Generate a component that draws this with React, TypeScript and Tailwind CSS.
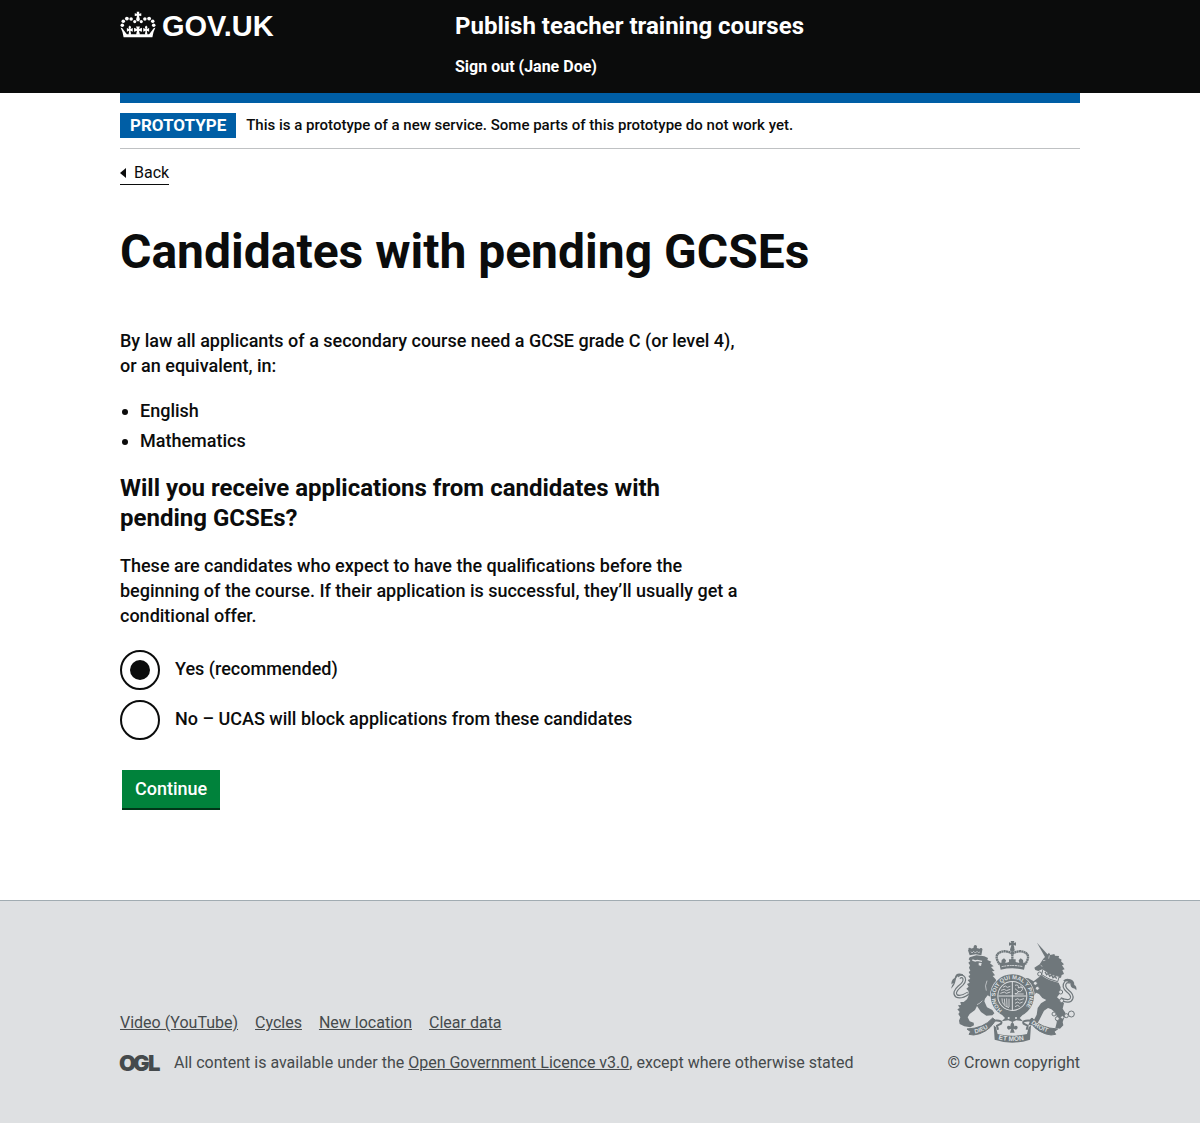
import type { ReactNode } from "react";

function CrownIcon() {
  return (
    <svg viewBox="29 33 110 82" className="-mt-[3px] h-[27px] w-9 shrink-0" fill="currentColor" aria-hidden="true">
      <path d="M80 35h8l-1 6 7-1v8l-7-1 2 9q-5 6-10 0l2-9-7 1v-8l7 1z" />
      <circle cx="84" cy="59" r="5.5" />
      <circle cx="36" cy="76" r="5.4" />
      <circle cx="39" cy="64" r="5.4" />
      <circle cx="50" cy="56" r="5.8" />
      <circle cx="63" cy="57" r="5.4" />
      <circle cx="74" cy="65" r="4.8" />
      <circle cx="132" cy="76" r="5.4" />
      <circle cx="129" cy="64" r="5.4" />
      <circle cx="118" cy="56" r="5.8" />
      <circle cx="105" cy="57" r="5.4" />
      <circle cx="94" cy="65" r="4.8" />
      <path d="M31 84q6-1 10 8l9 12h68l9-12q4-9 10-8-6 10-9 29H40q-3-19-9-29z" />
      <path d="M55 82l4-5 4 5-2 6 7-3v11l-7-3 2 12h-8l2-12-7 3v-11l7 3zM105 82l4-5 4 5-2 6 7-3v11l-7-3 2 12h-8l2-12-7 3v-11l7 3zM78 80h12l-3 8 9-4v12l-9-3 3 12H78l3-12-9 3v-12l9 4z" />
    </svg>
  );
}

function RoyalArms() {
  return (
    <svg viewBox="31 30 381 315" className="h-[105px] w-[127px] overflow-visible" fill="#6f777b" role="img" aria-label="Royal coat of arms">
      {/* lion */}
      <g>
        <path d="M90 76l-5-15 7-5 9-2 3-6h5l2 6 9 2 8 5-3 15-17-3z" />
        <circle cx="107" cy="50" r="5" />
        <circle cx="90" cy="57" r="4" />
        <circle cx="124" cy="58" r="4" />
        <path d="M94 65l3 4 5-5 5 5 5-5 4 4 5-2" fill="none" stroke="#dee0e2" strokeWidth="2" />
        <path d="M90 82L110 76 134 79 145 84 143 90 155 95 151 100 162 109 154 111 165 123 157 124 166 136 159 138 168 148 172 158 168 168 160 178 163 190 170 195 172 206 162 208 152 200 144 196 136 206 134 214 142 232 158 240 164 250 158 256 140 257 124 246 112 228 106 240 90 252 84 262 90 274 102 278 103 286 92 292 74 289 60 282 58 272 62 262 56 252 60 246 53 238 60 234 55 226 64 225 62 216 72 216 82 208 88 194 86 182 80 176 87 170 82 162 90 158 84 150 92 147 86 138 92 135 87 126 92 122 88 113 91 106 86 98 92 93 87 88z" />
        <path d="M98 90l9 3 6-2 14 3" fill="none" stroke="#dee0e2" strokeWidth="4" />
        <path d="M117 98l9 1-2 9-7-2z" fill="#dee0e2" />
        <path d="M142 152q-8 16-2 30M112 224q10-4 16-12" fill="none" stroke="#dee0e2" strokeWidth="2" />
        <path d="M86 190q-22 14-35 8-12-10 8-28 19-14 14-26-6-9-15-1" fill="none" stroke="#6f777b" strokeWidth="11" />
        <path d="M84 190q-20 14-33 8-12-10 8-28 19-14 14-26-6-9-15-1" fill="none" stroke="#dee0e2" strokeWidth="4" />
        <path d="M70 137q-20-4-22 14-3 17-14 25 3-12 8-16-8 0-6 8-4-17 9-24 4-19 25-11z" />
      </g>
      {/* unicorn */}
      <g>
        <path d="M292 38l36 40-9 8z" />
        <path d="M300 103l11-17 10-10 7-8 4 7 12-3 2 5 12 1-1 6 9 5-2 5 9 9-6 3 8 12-7 2 5 12-7 3-2 8-14 1-36-16-3-12-15 7-9-3-3-7z" />
        <path d="M310 92l7-1M303 106l5 3M329 76l-2 10" stroke="#dee0e2" strokeWidth="2" />
        <path d="M310 117q20 18 49 22l-5 16q-28-6-48-21z" fill="#dee0e2" stroke="#6f777b" strokeWidth="3" />
        <path d="M316 126l5 8 5-4 4 9 6-4 4 8 6-4 5 7" fill="none" stroke="#6f777b" strokeWidth="4" />
        <path d="M305 136q24 18 52 22l6 14-2 18-9 12 12 10 9 8-4 16 8 12-3 14-5 14 2 10-10 10-14-2 4-16 1-18-5-12-12-10-10-4-12 8-8 16-6 12-7 12-16 4-10-1 4-9 14-8 7-14 3-20 10-14 16-10-12-6-10-12-9-4-8 12-12-4 0-10 7-10-10-12-8-8-12 2-2-8 8-7 14 2 16 9z" />
        <path d="M362 207q29 12 34-2 3-10-12-22-16-14-6-26 8-7 15 1" fill="none" stroke="#6f777b" strokeWidth="11" />
        <path d="M362 207q29 12 34-2 3-10-12-22-16-14-6-26 8-7 15 1" fill="none" stroke="#dee0e2" strokeWidth="4" />
        <path d="M370 153q8-10 22-5 12 3 12 17 8 4 6 16-6-8-10-6-8-3-8-15-8-8-22-7z" />
        <g fill="#dee0e2" stroke="#6f777b" strokeWidth="3">
          <circle cx="395" cy="252" r="9" />
          <circle cx="380" cy="257" r="6" />
          <circle cx="343" cy="252" r="6" />
          <circle cx="353" cy="266" r="6" />
          <circle cx="368" cy="262" r="5" />
          <circle cx="366" cy="212" r="6" />
          <circle cx="363" cy="186" r="6" />
          <circle cx="300" cy="132" r="6" />
          <circle cx="287" cy="160" r="6" />
          <circle cx="293" cy="175" r="6" />
        </g>
      </g>
      {/* garter and shield */}
      <circle cx="218" cy="198" r="67" fill="#dee0e2" />
      <circle cx="218" cy="198" r="55" fill="none" stroke="#6f777b" strokeWidth="20" />
      <path id="garter" d="M188 240a51 51 0 1 1 60 0" fill="none" />
      <text fill="#dee0e2" fontFamily="Liberation Sans, sans-serif" fontSize="17" fontWeight="700">
        <textPath href="#garter">HONI SOIT QUI MAL Y PENSE</textPath>
      </text>
      <circle cx="218" cy="198" r="42" />
      <path d="M218 156v84M176 198h84" stroke="#dee0e2" strokeWidth="3" />
      <g stroke="#dee0e2" strokeWidth="2.5" fill="none">
        <path d="M190 172l7-4 6 4 9-3M184 181l10-3 6 4 12-4M182 190l12-4 6 4 12-4" />
        <path d="M226 166q12-4 10 8 14-6 12 5-4 9-13 6-2 8-10 6M226 176l12 10M242 168l8 6M226 192h26" />
        <path d="M187 205q-1 22 21 28M194 206l2 20M201 205l1 25M208 206v25" />
        <path d="M226 210l8-4 6 4 13-4M226 220l8-4 6 4 9-4M226 230l8-4 6 4" />
      </g>
      <path d="M188 256l18-4 12 8 12-8 18 4-8 8 10 10-20-3-12 5-12-5-20 3 10-10z" />
      <circle cx="207" cy="264" r="3" fill="#dee0e2" />
      <circle cx="229" cy="264" r="3" fill="#dee0e2" />
      {/* crown */}
      <path d="M213 33h11l-2 6 7-2v10l-7-2 2 9q-5 4-11 0l2-9-7 2v-10l7 2z" />
      <circle cx="218" cy="59" r="7" />
      <g fill="none" stroke="#6f777b" strokeWidth="7" strokeDasharray="6 1">
        <path d="M218 71q-25-14-42-1-12 11 4 33" />
        <path d="M218 71q25-14 42-1 12 11-4 33" />
        <path d="M218 66v32" />
      </g>
      <path d="M178 97l7 2 1-9 7-5 6 6-2 8 11-3v-8h20v8l11 3-2-8 6-6 7 5 1 9 7-2-5 22q-35-8-70 0z" />
      <path d="M186 110q32-7 64 0" fill="none" stroke="#dee0e2" strokeWidth="3" strokeDasharray="6 2" />
      {/* motto ribbon */}
      <path d="M82 297q50-2 77-33l7 6-3 8q-22 32-61 37l-14-2 5-8z" stroke="#6f777b" strokeWidth="3" />
      <path d="M354 297q-50-2-77-33l-7 6 3 8q22 32 61 37l14-2-5-8z" stroke="#6f777b" strokeWidth="3" />
      <path d="M163 272q28-2 21 9l-12 6 3 12M273 272q-28-2-21 9l12 6-3 12" fill="none" stroke="#6f777b" strokeWidth="6" />
      <path d="M162 286l7 6 5 20q44 10 88 0l5-20 7-6-3 43q-53 18-106 0z" />
      <path id="motto-left" d="M106 310q34-6 62-32" fill="none" />
      <path id="motto-mid" d="M176 328q42 11 90-1" fill="none" />
      <path id="motto-right" d="M274 280q24 22 66 31" fill="none" />
      <g fill="#dee0e2" fontFamily="Liberation Sans, sans-serif" fontSize="18" fontWeight="700">
        <text><textPath href="#motto-left">DIEU</textPath></text>
        <text fontSize="20"><textPath href="#motto-mid">ET MON</textPath></text>
        <text><textPath href="#motto-right">DROIT</textPath></text>
      </g>
      <path d="M218 275q-10 10-3 19-3-9-11-6-5 7 3 11l8-3-4 12h14l-4-12 8 3q8-4 3-11-8-3-11 6 7-9-3-19z" />
    </svg>
  );
}

function OglLogo() {
  return (
    <svg viewBox="0 0 41 18" className="h-[18px] w-[41px] shrink-0 overflow-visible" role="img" aria-label="Open Government Licence">
      <text x="-1 13 28" y="17" fill="#454a4c" fontFamily="Inter, sans-serif" fontSize="22" fontWeight="900">
        OGL
      </text>
    </svg>
  );
}

function Container({ children, className = "" }: { children: ReactNode; className?: string }) {
  return <div className={"mx-auto w-full max-w-[990px] px-4 sm:max-w-[960px] sm:px-0 " + className}>{children}</div>;
}

const answers = [
  { id: "yes", label: "Yes (recommended)" },
  { id: "no", label: "No – UCAS will block applications from these candidates" },
];

const footerLinks = ["Video (YouTube)", "Cycles", "New location", "Clear data"];

export default function App() {
  return (
    <div className="bg-white font-['Roboto',sans-serif] text-[#0b0c0c]">
      <header className="bg-[#0b0c0c] text-white">
        <Container className="flex flex-wrap pt-2 pb-[14px]">
          <div className="w-[335px]">
            <a href="#" className="flex items-center gap-[6px] font-['Liberation_Sans',sans-serif] text-[29px] leading-9 font-bold">
              <CrownIcon />
              GOV.UK
            </a>
          </div>
          <div className="flex flex-col items-start">
            <a href="#" className="text-2xl leading-9 font-bold">Publish teacher training courses</a>
            <a href="#" className="mt-[10px] text-base leading-[25px] font-bold">Sign out (Jane Doe)</a>
          </div>
        </Container>
      </header>

      <Container>
        <div className="h-[10px] bg-[#005ea5]" />
        <div className="flex items-center gap-[10px] border-b border-[#bfc1c3] py-[10px]">
          <strong className="bg-[#005ea5] px-[10px] text-[17px] leading-[25px] font-bold text-white">PROTOTYPE</strong>
          <span className="text-[15px] leading-[25px] font-medium">
            This is a prototype of a new service. Some parts of this prototype do not work yet.
          </span>
        </div>

        <a href="#" className="mt-3 inline-flex items-center gap-2 border-b border-[#0b0c0c] text-base leading-[23px]">
          <svg viewBox="0 0 6 10" className="h-[10px] w-[6px]" fill="currentColor" aria-hidden="true">
            <path d="M6 0v10L0 5z" />
          </svg>
          Back
        </a>

        <main className="pb-[90px] text-[18px] leading-[25px] font-medium">
          <h1 className="mt-[42px] text-5xl leading-[50px] font-bold">Candidates with pending GCSEs</h1>
          <form className="mt-[51px] max-w-[630px]" onSubmit={(e) => e.preventDefault()}>
            <p>By law all applicants of a secondary course need a GCSE grade C (or level 4), or an equivalent, in:</p>
            <ul className="mt-5 list-disc space-y-[5px] pl-5">
              <li>English</li>
              <li>Mathematics</li>
            </ul>
            <h2 className="mt-5 text-2xl leading-[30px] font-bold">
              Will you receive applications from candidates with pending GCSEs?
            </h2>
            <p className="mt-5">
              These are candidates who expect to have the qualifications before the beginning of the course. If their
              application is successful, they’ll usually get a conditional offer.
            </p>
            <div className="mt-[22px] flex flex-col gap-[10px]">
              {answers.map(({ id, label }) => (
                <div key={id} className="flex items-start gap-[15px]">
                  <input
                    type="radio"
                    id={id}
                    name="pending"
                    defaultChecked={id === "yes"}
                    className="grid size-10 shrink-0 appearance-none place-items-center rounded-full border-2 border-[#0b0c0c] before:size-5 before:rounded-full checked:before:bg-[#0b0c0c]"
                  />
                  <label htmlFor={id} className="pt-[6px]">{label}</label>
                </div>
              ))}
            </div>
            <button type="submit" className="mt-[30px] ml-[2px] border-b-2 border-[#003618] bg-[#00823b] px-[13px] pt-[6px] pb-[7px] text-white">
              Continue
            </button>
          </form>
        </main>
      </Container>

      <footer className="border-t border-[#a1acb2] bg-[#dee0e2] text-base leading-5 text-[#454a4c]">
        <Container className="flex items-end justify-between gap-6 pt-[39px] pb-[50px]">
          <div>
            <nav className="flex flex-wrap gap-[17px]">
              {footerLinks.map((link) => (
                <a key={link} href="#" className="underline">{link}</a>
              ))}
            </nav>
            <div className="mt-5 flex items-center gap-[13px]">
              <OglLogo />
              <p>
                All content is available under the{" "}
                <a href="#" className="underline">Open Government Licence v3.0</a>, except where otherwise stated
              </p>
            </div>
          </div>
          <a href="#" className="flex shrink-0 flex-col items-center gap-2">
            <RoyalArms />
            © Crown copyright
          </a>
        </Container>
      </footer>
    </div>
  );
}
